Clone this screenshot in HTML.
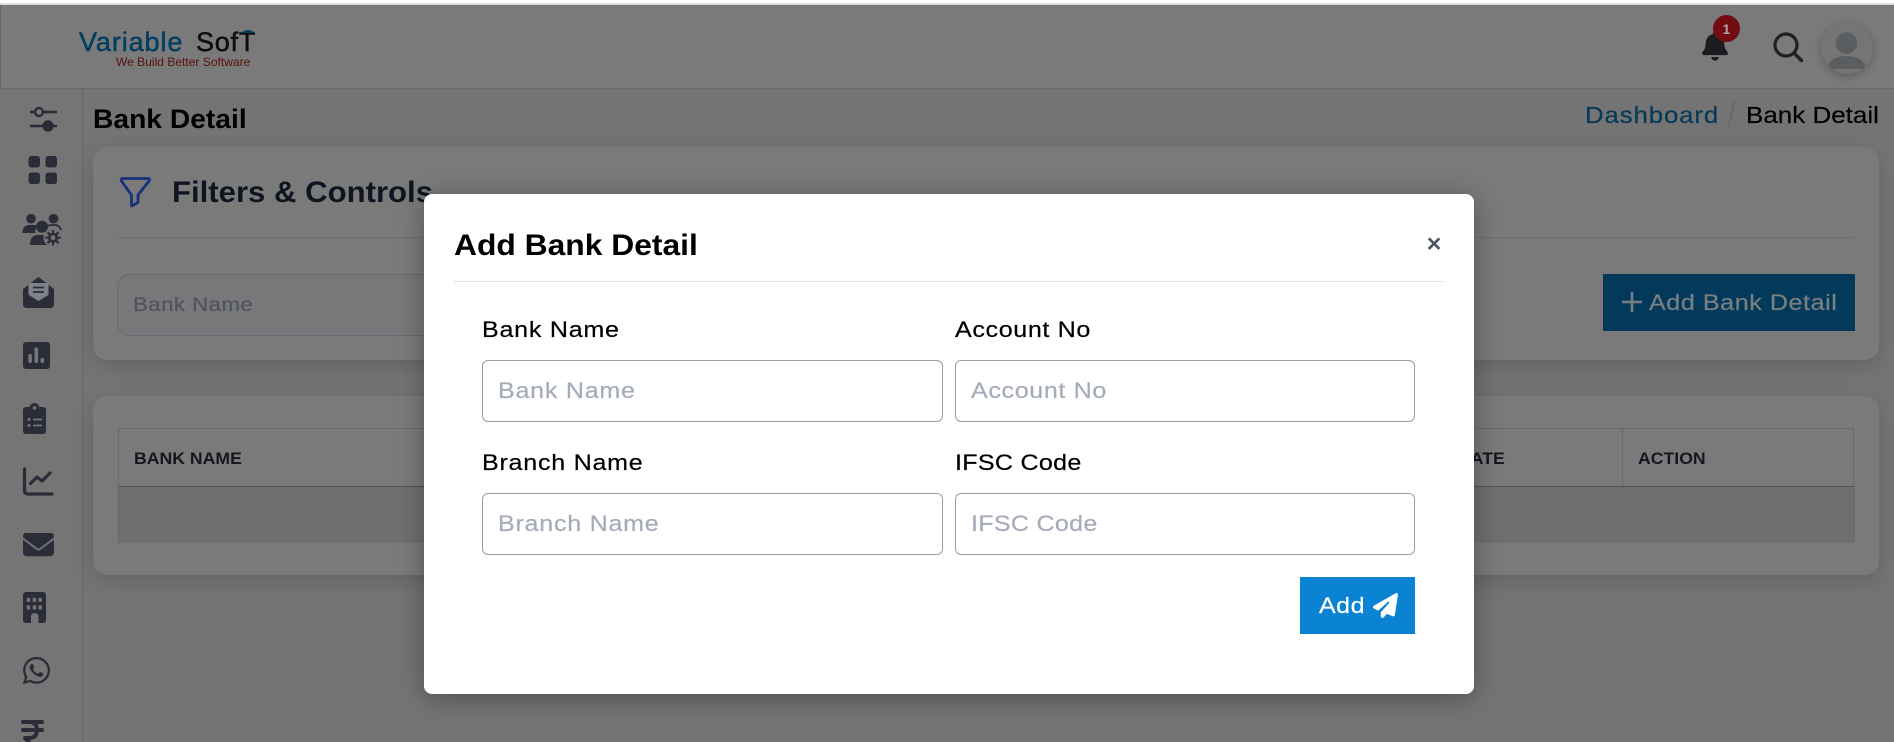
<!DOCTYPE html>
<html lang="en">
<head>
<meta charset="utf-8">
<title>Bank Detail</title>
<style>
html,body{margin:0;padding:0;width:1894px;height:742px;overflow:hidden;background:#fff;font-family:"Liberation Sans",sans-serif}
.a{position:absolute;box-sizing:border-box}
.t{position:absolute;white-space:nowrap;line-height:1;transform-origin:0 0}
.r{transform:scaleX(1.14);letter-spacing:.5px;-webkit-text-stroke:.2px currentColor}
#page{position:absolute;left:0;top:5px;width:1894px;height:737px;background:#747474;overflow:hidden}
#wrap{position:absolute;left:0;top:-5px;width:1894px;height:742px}
.card{background:#7a7a7a;border-radius:14px;box-shadow:0 6px 20px rgba(0,0,0,.14)}
.th{font-weight:bold;font-size:16.5px;color:#14171f;transform:scaleX(1.07)}
.lab{font-size:22px;color:#000}
.ph{font-size:22px;color:#a5acb9}
.inp{background:#fff;border:1px solid #9c9c9c;border-radius:6px;width:461px;height:62px}
svg{position:absolute;left:0;top:0;overflow:visible}
</style>
</head>
<body>
<div class="a" style="left:0;top:3px;width:1894px;height:2px;background:#dcdcdc"></div>
<div id="page"><div id="wrap">

  <!-- header -->
  <div class="a" style="left:0;top:5px;width:1894px;height:84px;background:#7a7a7a;border-bottom:1px solid #6a6a6a;border-left:1px solid #666"></div>
  <div class="a" style="left:0;top:89px;width:83px;height:653px;background:#757575;border-right:1px solid #666"></div>

  <!-- logo -->
  <div class="t" style="left:79px;top:29px;font-size:27px;letter-spacing:.9px;color:#043f60;-webkit-text-stroke:.5px #043f60">Variable</div>
  <div class="t" style="left:196px;top:29px;font-size:27px;letter-spacing:.8px;color:#0d0d0d;-webkit-text-stroke:.5px #0d0d0d">SofT</div>
  <div class="t" style="left:116px;top:56px;font-size:12px;color:#5a100a;letter-spacing:.02px">We Build Better Software</div>
  <svg width="1894" height="742"><path d="M241 33q7-6 14 0z" fill="#043f60"/></svg>

  <!-- header right -->
  <svg width="1894" height="742">
    <g transform="translate(1702 31) scale(.058)" fill="#1b1c1f"><path d="M224 0c-17.700 0-32 14.300-32 32V51.200C119 66 64 130.600 64 208v18.800c0 47-17.300 92.400-48.500 127.600l-7.400 8.300c-8.400 9.400-10.400 22.900-5.300 34.400S19.400 416 32 416H416c12.600 0 24-7.400 29.200-18.900s3.100-25-5.300-34.400l-7.400-8.300C401.300 319.200 384 273.900 384 226.800V208c0-77.400-55-142-128-156.800V32c0-17.700-14.300-32-32-32zm45.300 493.300c12-12 18.700-28.300 18.700-45.300H224 160c0 17 6.700 33.300 18.700 45.300s28.300 18.700 45.300 18.700s33.300-6.700 45.300-18.700z"/></g>
    <circle cx="1726.500" cy="28.500" r="13.500" fill="#720b12"/>
    <circle cx="1786" cy="45" r="11" fill="none" stroke="#1f2022" stroke-width="3.200"/>
    <path d="M1794.500 53.500L1801.500 60.500" stroke="#1f2022" stroke-width="3.400" stroke-linecap="round"/>
  </svg>
  <div class="t" style="left:1722.500px;top:21.500px;font-size:14px;font-weight:bold;color:#b8a3a5">1</div>
  <div class="a" style="left:1821px;top:22px;width:52px;height:52px;border-radius:50%;background:#757575;box-shadow:0 2px 8px rgba(0,0,0,.25);overflow:hidden">
    <svg width="52" height="52"><circle cx="25.500" cy="21" r="10.800" fill="#5b5e60"/><path d="M6 47q3-13 19.500-13t20.500 13z" fill="#5b5e60"/></svg>
  </div>

  <!-- sidebar icons -->
  <svg width="90" height="742" fill="#2a2d38" stroke="none">
    <g stroke="#2a2d38" stroke-width="2.400" fill="none">
      <path d="M30 112H35M43 112H57M30 126H57"/>
      <circle cx="39" cy="112" r="4"/>
    </g>
    <circle cx="48" cy="126" r="5.700"/>

    <rect x="28.500" y="156" width="11.500" height="11.500" rx="2.800"/>
    <rect x="45.500" y="156" width="11.500" height="11.500" rx="2.800"/>
    <rect x="28.500" y="172.500" width="11.500" height="11.500" rx="2.800"/>
    <rect x="45.500" y="172.500" width="11.500" height="11.500" rx="2.800"/>

    <circle cx="31" cy="218.700" r="4.800"/>
    <circle cx="53.500" cy="218.700" r="4.800"/>
    <path d="M22.500 233q0-8 7-8h5q2 0 3 1-3 3-2 7z"/>
    <circle cx="42" cy="226.800" r="6"/>
    <path d="M30 245q0-10 8-10h6q2 0 3 1l1 9z"/>
    <path d="M48 226q1-1 3-1h5q4 1 5 5" fill="none" stroke="#2a2d38" stroke-width="1.800"/>
    <circle cx="53" cy="237.700" r="9.500" fill="#757575"/>
    <circle cx="53" cy="237.700" r="5" fill="#2a2d38"/>
    <path d="M53 230v15.400M45.300 237.700h15.400M47.500 232.200l11 11M58.500 232.200l-11 11" stroke="#2a2d38" stroke-width="2.200"/>
    <circle cx="53" cy="237.700" r="2.400" fill="#757575"/>

    <path d="M23 289L38.500 277 54 289 54 296H23z"/>
    <rect x="28.500" y="283" width="20" height="19" fill="#7f8389"/>
    <path d="M33 287.500H44M33 292H44" stroke="#2a2d38" stroke-width="1.800"/>
    <path d="M23 291.500L38.500 301 54 291.500V304q0 4-4 4H27q-4 0-4-4z"/>

    <rect x="23" y="342" width="27" height="27" rx="3"/>
    <rect x="28.300" y="354" width="3.600" height="9" rx="1.400" fill="#757575"/>
    <rect x="34.500" y="347.500" width="3.600" height="15.500" rx="1.400" fill="#757575"/>
    <rect x="40.500" y="358" width="3.600" height="5" rx="1.400" fill="#757575"/>

    <rect x="23" y="407" width="23" height="27" rx="3"/>
    <circle cx="34.500" cy="408" r="5"/>
    <circle cx="34.500" cy="408" r="1.800" fill="#757575"/>
    <circle cx="29" cy="419.500" r="1.500" fill="#757575"/>
    <circle cx="29" cy="425.500" r="1.500" fill="#757575"/>
    <path d="M33 419.500H42M33 425.500H42" stroke="#757575" stroke-width="1.800"/>

    <path d="M24.500 469V490q0 4 4 4H52" fill="none" stroke="#2a2d38" stroke-width="3.200" stroke-linecap="round"/>
    <path d="M30.500 483.500L37 477 42 481 50 473" fill="none" stroke="#2a2d38" stroke-width="3.200" stroke-linecap="round" stroke-linejoin="round"/>

    <g transform="translate(23 529.100) scale(.0605)"><path d="M48 64C21.500 64 0 85.500 0 112c0 15.100 7.100 29.300 19.200 38.400L236.800 313.600c11.400 8.500 27 8.500 38.400 0L492.800 150.400c12.100-9.100 19.200-23.300 19.200-38.400c0-26.500-21.500-48-48-48H48zM0 176V384c0 35.300 28.700 64 64 64H448c35.300 0 64-28.700 64-64V176L294.400 339.200c-22.800 17.100-54 17.100-76.800 0L0 176z"/></g>

    <rect x="23" y="592" width="23" height="31" rx="3"/>
    <g fill="#757575">
      <rect x="26.700" y="597.700" width="3.500" height="4.300" rx=".8"/><rect x="32.700" y="597.700" width="3.500" height="4.300" rx=".8"/><rect x="38.400" y="597.700" width="3.500" height="4.300" rx=".8"/>
      <rect x="26.700" y="605.300" width="3.500" height="4.300" rx=".8"/><rect x="32.700" y="605.300" width="3.500" height="4.300" rx=".8"/><rect x="38.400" y="605.300" width="3.500" height="4.300" rx=".8"/>
      <path d="M31 623V616.500q0-3.500 3.700-3.500t3.800 3.500V623z"/>
    </g>

    <g transform="translate(23 655) scale(.0603)"><path d="M380.900 97.100C339 55.100 283.200 32 223.900 32c-122.400 0-222 99.600-222 222 0 39.100 10.200 77.300 29.600 111L0 480l117.700-30.900c32.400 17.700 68.900 27 106.100 27h.1c122.300 0 224.100-99.600 224.100-222 0-59.300-25.200-115-67.100-157zm-157 341.600c-33.200 0-65.700-8.900-94-25.700l-6.700-4-69.800 18.300L72 359.200l-4.400-7c-18.500-29.400-28.200-63.300-28.200-98.200 0-101.700 82.800-184.500 184.600-184.500 49.300 0 95.600 19.200 130.400 54.100 34.800 34.900 56.200 81.200 56.100 130.500 0 101.800-84.900 184.600-186.600 184.600zm101.200-138.200c-5.500-2.800-32.800-16.200-37.900-18-5.100-1.900-8.800-2.800-12.500 2.800-3.700 5.600-14.300 18-17.600 21.800-3.200 3.700-6.500 4.200-12 1.400-32.600-16.300-54-29.100-75.500-66-5.700-9.800 5.700-9.100 16.300-30.300 1.800-3.700.9-6.900-.5-9.700-1.400-2.800-12.500-30.100-17.100-41.200-4.500-10.800-9.100-9.300-12.500-9.500-3.200-.2-6.900-.2-10.600-.2-3.700 0-9.700 1.400-14.800 6.900-5.100 5.600-19.400 19-19.400 46.300 0 27.300 19.900 53.700 22.600 57.400 2.800 3.700 39.100 59.700 94.800 83.800 35.200 15.200 49 16.500 66.600 13.900 10.700-1.600 32.800-13.400 37.400-26.400 4.600-13 4.600-24.100 3.200-26.400-1.300-2.500-5-3.900-10.500-6.600z"/></g>

    <path d="M23 722H42M23 730H42M29 722q8 0 8 8t-8 8H25L38 752" fill="none" stroke="#2a2d38" stroke-width="4" stroke-linecap="round" stroke-linejoin="round"/>
  </svg>

  <!-- page head -->
  <div class="t" style="left:93px;top:106px;font-size:27px;font-weight:bold;color:#000;transform:scaleX(1.045)">Bank Detail</div>
  <div class="t" style="left:1585px;top:104px;font-size:23px;color:#043a59;transform:scaleX(1.12);letter-spacing:.8px;-webkit-text-stroke:.2px #043a59">Dashboard</div>
  <div class="t" style="left:1745.500px;top:104px;font-size:23px;color:#000;transform:scaleX(1.13);-webkit-text-stroke:.2px #000">Bank Detail</div>
  <svg width="1894" height="742"><path d="M1734 101L1729 126" stroke="#666" stroke-width="1.600"/></svg>

  <!-- filter card -->
  <div class="a card" style="left:93px;top:147px;width:1786px;height:213px"></div>
  <svg width="1894" height="742"><path d="M123 178.500H148q2.500 0 1 2.500L138 195V202.500L131.500 206V195L121.500 181q-1-2.500 1.500-2.500z" fill="none" stroke="#18317a" stroke-width="2.800" stroke-linejoin="round"/></svg>
  <div class="t" style="left:172px;top:177.600px;font-size:30px;font-weight:bold;color:#0e1521;transform:scaleX(1.037)">Filters &amp; Controls</div>
  <div class="a" style="left:117px;top:237px;width:1738px;height:1px;background:#6e6e6e"></div>
  <div class="a" style="left:117px;top:274px;width:400px;height:62px;border:1px solid #666b72;border-radius:13px;background:#777879"></div>
  <div class="t r" style="left:133px;top:295.500px;font-size:19.500px;color:#505359;letter-spacing:.4px">Bank Name</div>
  <div class="a" style="left:1603px;top:274px;width:252px;height:57px;background:#033a5c"></div>
  <svg width="1894" height="742"><path d="M1622 302H1642M1632 292V312" stroke="#7a7f81" stroke-width="2.600"/></svg>
  <div class="t r" style="left:1649px;top:292.400px;font-size:22px;color:#7a7f81">Add Bank Detail</div>

  <!-- table card -->
  <div class="a card" style="left:93px;top:396px;width:1786px;height:179px"></div>
  <div class="a" style="left:118px;top:428px;width:1736px;height:115px;border:1px solid #696969;border-bottom:0"></div>
  <div class="a" style="left:118px;top:486px;width:1736px;height:1px;background:#535353"></div>
  <div class="a" style="left:118px;top:487px;width:1737px;height:56px;background:#6f6f6f;border-left:1px solid #696969;border-right:1px solid #696969"></div>
  <div class="a" style="left:1622px;top:428px;width:1px;height:58px;background:#696969"></div>
  <div class="t th" style="left:134px;top:451px">BANK NAME</div>
  <div class="t th" style="left:1458px;top:451px">DATE</div>
  <div class="t th" style="left:1638px;top:451px">ACTION</div>

  <!-- modal -->
  <div class="a" style="left:424px;top:194px;width:1050px;height:500px;background:#fff;border-radius:8px;box-shadow:0 4px 26px rgba(0,0,0,.32)"></div>
  <div class="t" style="left:454px;top:230.600px;font-size:30px;font-weight:bold;color:#000;transform:scaleX(1.06)">Add Bank Detail</div>
  <div class="t" style="left:1426.700px;top:232px;font-size:25px;font-weight:bold;color:#4b5563">×</div>
  <div class="a" style="left:454px;top:281px;width:990px;height:1px;background:#dee2e6"></div>

  <div class="t r lab" style="left:482px;top:319.400px;letter-spacing:.65px">Bank Name</div>
  <div class="t r lab" style="left:955px;top:319.400px;letter-spacing:.55px">Account No</div>
  <div class="a inp" style="left:482px;top:360px"></div>
  <div class="a inp" style="left:955px;top:360px;width:460px"></div>
  <div class="t r ph" style="left:497.500px;top:380.400px;letter-spacing:.65px">Bank Name</div>
  <div class="t r ph" style="left:971px;top:380.400px;letter-spacing:.55px">Account No</div>

  <div class="t r lab" style="left:482px;top:452px;letter-spacing:.65px">Branch Name</div>
  <div class="t r lab" style="left:955px;top:452px;letter-spacing:.25px">IFSC Code</div>
  <div class="a inp" style="left:482px;top:493px"></div>
  <div class="a inp" style="left:955px;top:493px;width:460px"></div>
  <div class="t r ph" style="left:497.500px;top:513px;letter-spacing:.65px">Branch Name</div>
  <div class="t r ph" style="left:971px;top:513px;letter-spacing:.25px">IFSC Code</div>

  <div class="a" style="left:1300px;top:577px;width:115px;height:57px;background:#0b83d3"></div>
  <div class="t r" style="left:1318.500px;top:595.400px;font-size:22px;color:#fff;letter-spacing:.4px">Add</div>
  <svg width="1894" height="742"><g transform="translate(1373 593) scale(.0488)" fill="#fff"><path d="M498.100 5.600c10.100 7 15.400 19.100 13.500 31.200l-64 416c-1.500 9.700-7.400 18.200-16 23s-18.900 5.400-28 1.600L284 427.700l-68.500 74.100c-8.900 9.700-22.900 12.900-35.200 8.100S160 493.200 160 480V396.400c0-4 1.500-7.800 4.200-10.700L331.800 202.800c5.800-6.300 5.600-16-.4-22s-15.700-6.400-22-.7L106 360.800 17.700 316.600C7.100 311.300 .3 300.700 0 288.900s5.900-22.800 16.100-28.700l448-256c10.700-6.100 23.900-5.500 34 1.400z"/></g></svg>

</div></div>
</body>
</html>
